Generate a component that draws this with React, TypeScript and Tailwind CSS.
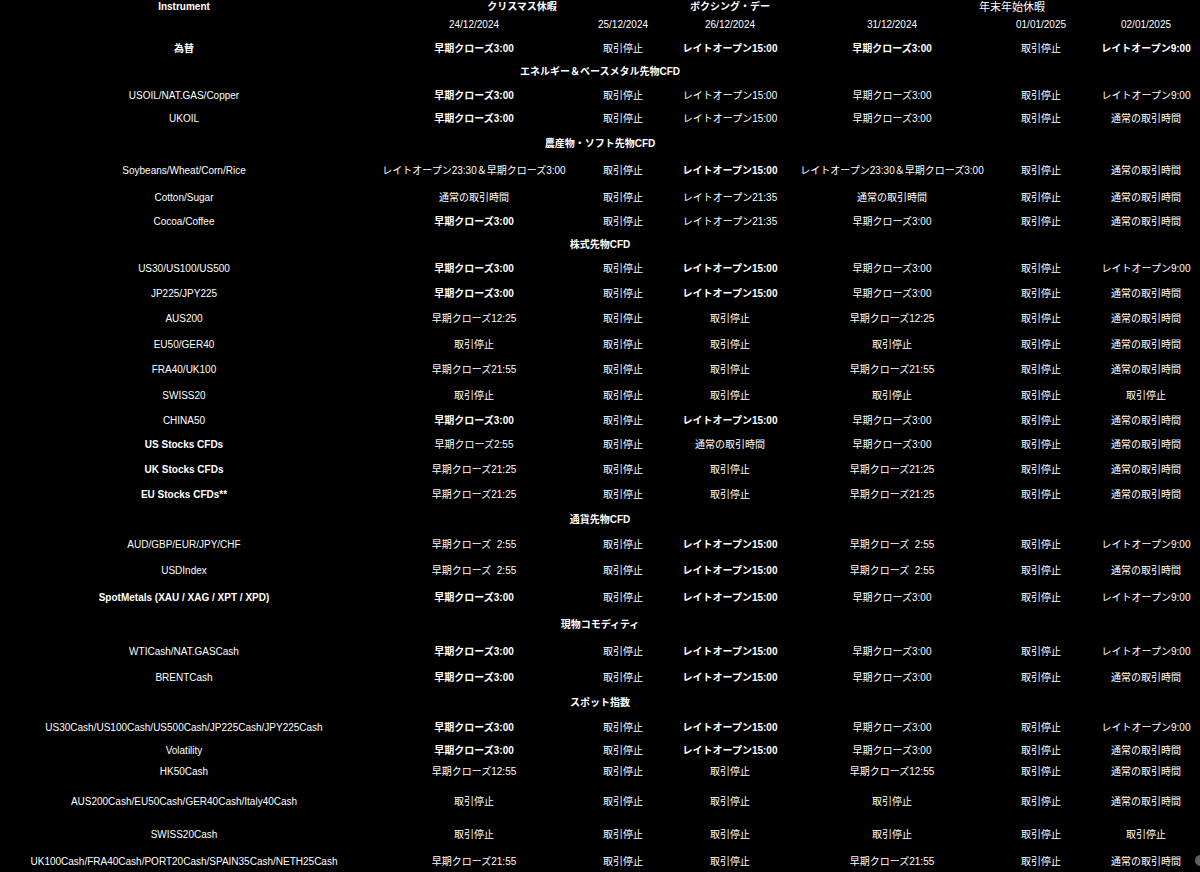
import React from "react";

// "*" in front of a value = bold cell
type DataRow = { kind: "data"; name: string; bold?: boolean; h: string; cells: string[] };
type SectionRow = { kind: "section"; label: string; h: string };
type Row = DataRow | SectionRow;

const STOP = "取引停止";
const NORMAL = "通常の取引時間";

const rows: Row[] = [
  { kind: "data", name: "為替", bold: true, h: "h-[23px]", cells: ["*早期クローズ3:00", STOP, "*レイトオープン15:00", "*早期クローズ3:00", STOP, "*レイトオープン9:00"] },
  { kind: "section", label: "エネルギー＆ベースメタル先物CFD", h: "h-[24px]" },
  { kind: "data", name: "USOIL/NAT.GAS/Copper", h: "h-[23px]", cells: ["*早期クローズ3:00", STOP, "レイトオープン15:00", "早期クローズ3:00", STOP, "レイトオープン9:00"] },
  { kind: "data", name: "UKOIL", h: "h-[24px]", cells: ["*早期クローズ3:00", STOP, "レイトオープン15:00", "早期クローズ3:00", STOP, NORMAL] },
  { kind: "section", label: "農産物・ソフト先物CFD", h: "h-[26px]" },
  { kind: "data", name: "Soybeans/Wheat/Corn/Rice", h: "h-[28px]", cells: ["レイトオープン23:30＆早期クローズ3:00", STOP, "*レイトオープン15:00", "レイトオープン23:30＆早期クローズ3:00", STOP, NORMAL] },
  { kind: "data", name: "Cotton/Sugar", h: "h-[26px]", cells: [NORMAL, STOP, "レイトオープン21:35", NORMAL, STOP, NORMAL] },
  { kind: "data", name: "Cocoa/Coffee", h: "h-[22px]", cells: ["*早期クローズ3:00", STOP, "レイトオープン21:35", "早期クローズ3:00", STOP, NORMAL] },
  { kind: "section", label: "株式先物CFD", h: "h-[23px]" },
  { kind: "data", name: "US30/US100/US500", h: "h-[25px]", cells: ["*早期クローズ3:00", STOP, "*レイトオープン15:00", "早期クローズ3:00", STOP, "レイトオープン9:00"] },
  { kind: "data", name: "JP225/JPY225", h: "h-[25px]", cells: ["*早期クローズ3:00", STOP, "*レイトオープン15:00", "早期クローズ3:00", STOP, NORMAL] },
  { kind: "data", name: "AUS200", h: "h-[26px]", cells: ["早期クローズ12:25", STOP, STOP, "早期クローズ12:25", STOP, NORMAL] },
  { kind: "data", name: "EU50/GER40", h: "h-[25px]", cells: [STOP, STOP, STOP, STOP, STOP, NORMAL] },
  { kind: "data", name: "FRA40/UK100", h: "h-[26px]", cells: ["早期クローズ21:55", STOP, STOP, "早期クローズ21:55", STOP, NORMAL] },
  { kind: "data", name: "SWISS20", h: "h-[25px]", cells: [STOP, STOP, STOP, STOP, STOP, STOP] },
  { kind: "data", name: "CHINA50", h: "h-[25px]", cells: ["*早期クローズ3:00", STOP, "*レイトオープン15:00", "早期クローズ3:00", STOP, NORMAL] },
  { kind: "data", name: "US Stocks CFDs", bold: true, h: "h-[24px]", cells: ["早期クローズ2:55", STOP, NORMAL, "早期クローズ3:00", STOP, NORMAL] },
  { kind: "data", name: "UK Stocks CFDs", bold: true, h: "h-[25px]", cells: ["早期クローズ21:25", STOP, STOP, "早期クローズ21:25", STOP, NORMAL] },
  { kind: "data", name: "EU Stocks CFDs**", bold: true, h: "h-[25px]", cells: ["早期クローズ21:25", STOP, STOP, "早期クローズ21:25", STOP, NORMAL] },
  { kind: "section", label: "通貨先物CFD", h: "h-[25px]" },
  { kind: "data", name: "AUD/GBP/EUR/JPY/CHF", h: "h-[26px]", cells: ["早期クローズ  2:55", STOP, "*レイトオープン15:00", "早期クローズ  2:55", STOP, "レイトオープン9:00"] },
  { kind: "data", name: "USDIndex", h: "h-[26px]", cells: ["早期クローズ  2:55", STOP, "*レイトオープン15:00", "早期クローズ  2:55", STOP, NORMAL] },
  { kind: "data", name: "SpotMetals (XAU / XAG / XPT / XPD)", bold: true, h: "h-[27px]", cells: ["*早期クローズ3:00", STOP, "*レイトオープン15:00", "早期クローズ3:00", STOP, "レイトオープン9:00"] },
  { kind: "section", label: "現物コモディティ", h: "h-[27px]" },
  { kind: "data", name: "WTICash/NAT.GASCash", h: "h-[27px]", cells: ["*早期クローズ3:00", STOP, "*レイトオープン15:00", "早期クローズ3:00", STOP, "レイトオープン9:00"] },
  { kind: "data", name: "BRENTCash", h: "h-[25px]", cells: ["*早期クローズ3:00", STOP, "*レイトオープン15:00", "早期クローズ3:00", STOP, NORMAL] },
  { kind: "section", label: "スポット指数", h: "h-[25px]" },
  { kind: "data", name: "US30Cash/US100Cash/US500Cash/JP225Cash/JPY225Cash", h: "h-[25px]", cells: ["*早期クローズ3:00", STOP, "*レイトオープン15:00", "早期クローズ3:00", STOP, "レイトオープン9:00"] },
  { kind: "data", name: "Volatility", h: "h-[22px]", cells: ["*早期クローズ3:00", STOP, "*レイトオープン15:00", "早期クローズ3:00", STOP, NORMAL] },
  { kind: "data", name: "HK50Cash", h: "h-[20px]", cells: ["早期クローズ12:55", STOP, STOP, "早期クローズ12:55", STOP, NORMAL] },
  { kind: "data", name: "AUS200Cash/EU50Cash/GER40Cash/Italy40Cash", h: "h-[40px]", cells: [STOP, STOP, STOP, STOP, STOP, NORMAL] },
  { kind: "data", name: "SWISS20Cash", h: "h-[26px]", cells: [STOP, STOP, STOP, STOP, STOP, STOP] },
  { kind: "data", name: "UK100Cash/FRA40Cash/PORT20Cash/SPAIN35Cash/NETH25Cash", h: "h-[28px]", cells: ["早期クローズ21:55", STOP, STOP, "早期クローズ21:55", STOP, NORMAL] },
];

const Value = ({ v }: { v: string }) => {
  const bold = v.startsWith("*");
  return (
    <td className={`p-0 text-center align-middle whitespace-pre ${bold ? "font-bold" : "font-normal"}`}>
      {bold ? v.slice(1) : v}
    </td>
  );
};

const App = () => {
  return (
    <div
      className="relative min-h-screen bg-black pt-[1px] text-white overflow-hidden"
      style={{ fontFamily: '"Liberation Sans", "Noto Sans CJK JP", sans-serif' }}
    >
      <table className="w-[1200px] table-fixed border-collapse text-[10px] leading-[12px]">
        <colgroup>
          <col className="w-[368px]" />
          <col className="w-[212px]" />
          <col className="w-[86px]" />
          <col className="w-[128px]" />
          <col className="w-[196px]" />
          <col className="w-[102px]" />
          <col className="w-[108px]" />
        </colgroup>
        <thead>
          <tr className="h-[12px]">
            <th className="p-0 text-center font-bold">Instrument</th>
            <th colSpan={2} className="p-0 pl-[10px] text-center font-bold">クリスマス休暇</th>
            <th className="p-0 text-center font-bold">ボクシング・デー</th>
            <th colSpan={3} className="p-0 pl-[30px] text-center text-[11px] font-normal">年末年始休暇</th>
          </tr>
          <tr className="h-[24px]">
            <th className="p-0" />
            {["24/12/2024", "25/12/2024", "26/12/2024", "31/12/2024", "01/01/2025", "02/01/2025"].map((d) => (
              <th key={d} className="p-0 text-center font-normal">{d}</th>
            ))}
          </tr>
        </thead>
        <tbody>
          {rows.map((r, i) =>
            r.kind === "section" ? (
              <tr key={i} className={r.h}>
                <td colSpan={7} className="p-0 text-center align-middle font-bold">{r.label}</td>
              </tr>
            ) : (
              <tr key={i} className={r.h}>
                <td className={`p-0 text-center align-middle whitespace-nowrap ${r.bold ? "font-bold" : "font-normal"}`}>
                  {r.name}
                </td>
                {r.cells.map((c, j) => (
                  <Value key={j} v={c} />
                ))}
              </tr>
            )
          )}
        </tbody>
      </table>

      {/* floating widget peeking in from the right edge */}
      <div className="absolute right-[-6px] top-[855px] h-[11px] w-[11px] rounded-full bg-[#5f5f5f]" />
    </div>
  );
};

export default App;
